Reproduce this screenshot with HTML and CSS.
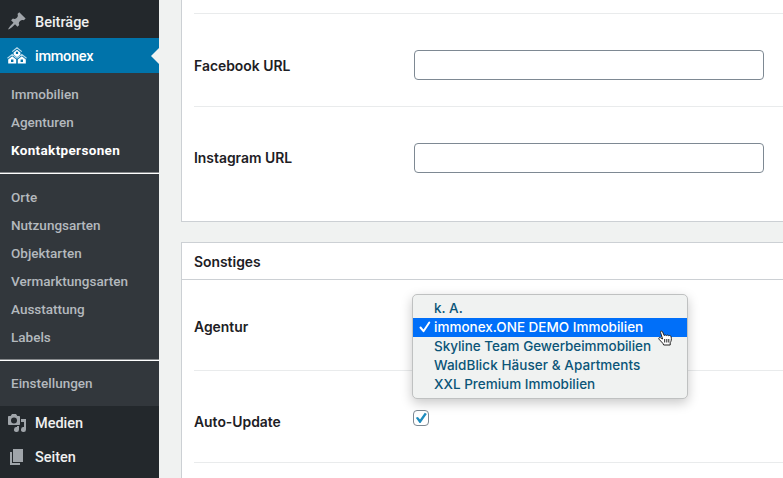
FILE: index.html
```html
<!DOCTYPE html>
<html lang="de">
<head>
<meta charset="utf-8">
<title>Kontaktpersonen</title>
<link rel="stylesheet" href="styles.css">
</head>
<body>
<div class="app">
  <nav class="sidebar">
    <a class="item item-posts">
      <svg class="icon" viewBox="0 0 20 20"><path d="M10.44 3.02l1.82-1.82 6.36 6.35-1.83 1.82c-1.05-.68-2.48-.57-3.41.36l-.75.75c-.92.93-1.04 2.35-.35 3.41l-1.83 1.82-2.41-2.41-2.8 2.79c-.42.42-3.38 2.71-3.8 2.29s1.86-3.39 2.28-3.81l2.79-2.79L4.1 9.36l1.83-1.82c1.05.69 2.48.57 3.4-.36l.75-.75c.93-.92 1.05-2.35.36-3.41z"/></svg>
      <span>Beiträge</span>
    </a>
    <a class="item item-current">
      <svg class="icon houses" viewBox="0 0 20 20">
        <path class="roof" d="M5.200 5.600L10 1.800L14.800 5.600M.500 12.200L5.200 8.400L9.800 12.200M10.200 12.200L14.800 8.400L19.500 12.200"/>
        <path fill-rule="evenodd" d="M10 3.700L6.600 6.400V8.600L10 11.200L13.400 8.600V6.400zM8.900 5.800H11.100V8H8.900zM5.200 10.300L1.200 13.500V17.400H9.200V13.500zM4 13.500H6.400V15.900H4zM14.800 10.300L10.800 13.500V17.400H18.800V13.500zM13.600 13.500H16V15.900H13.600z"/>
      </svg>
      <span>immonex</span>
    </a>
    <div class="submenu">
      <a>Immobilien</a>
      <a>Agenturen</a>
      <a class="active">Kontaktpersonen</a>
      <hr>
      <a>Orte</a>
      <a>Nutzungsarten</a>
      <a>Objektarten</a>
      <a>Vermarktungsarten</a>
      <a>Ausstattung</a>
      <a>Labels</a>
      <hr>
      <a>Einstellungen</a>
    </div>
    <a class="item">
      <svg class="icon" viewBox="0 0 20 20"><path fill-rule="evenodd" d="M13 11V4c0-.55-.45-1-1-1h-1.670L9 1H5L3.670 3H2c-.55 0-1 .45-1 1v7c0 .55.45 1 1 1h10c.55 0 1-.45 1-1zM7 4.500a3 3 0 1 1 0 6 3 3 0 0 1 0-6z"/><path d="M14 6h5v10.500a2.500 2.500 0 1 1-2-2.450V9h-3zM10 13h2v3.500a2.500 2.500 0 1 1-2-2.450z"/></svg>
      <span>Medien</span>
    </a>
    <a class="item">
      <svg class="icon" viewBox="0 0 20 20"><path d="M6 15V2h10v13H6zM5 16h8v2H3V5h2v11z"/></svg>
      <span>Seiten</span>
    </a>
  </nav>
  <main class="content">
    <section class="card card-urls">
      <div class="row"><label>Facebook URL</label><input type="text"></div>
      <div class="row row-last"><label>Instagram URL</label><input type="text"></div>
    </section>
    <section class="card card-misc">
      <h2>Sonstiges</h2>
      <div class="row row-agency">
        <label>Agentur</label>
        <div class="select">
          <ul class="menu">
            <li><span>k. A.</span></li>
            <li class="selected"><svg class="tick" viewBox="0 0 12 12"><path d="M1.500 6.500L4.500 10.200L10.300 1.500"/></svg><span>immonex.ONE DEMO Immobilien</span></li>
            <li><span class="snug">Skyline Team Gewerbeimmobilien</span></li>
            <li><span class="loose">WaldBlick Häuser &amp; Apartments</span></li>
            <li><span>XXL Premium Immobilien</span></li>
          </ul>
          <svg class="pointer" viewBox="0 0 14 16"><path d="M4.600 9L2.600 2.700C2.200 1 3.900.3 4.600 1.900L6.200 5.600C7 4.600 8 4.800 8.500 5.600C9.300 4.700 10.200 5 10.700 5.900C11.700 5 13 5.700 13.200 7C13.600 9.500 13.300 11 12.200 12.700V15H5.700L4.800 13.300L1 9.200C.2 8 1.500 7 2.700 7.800z"/><path class="fingers" d="M6.700 9v3.500M8.800 9v3.500M10.800 9v3.500"/></svg>
        </div>
      </div>
      <div class="row row-update">
        <label>Auto-Update</label>
        <span class="checkbox"><svg viewBox="0 0 14 14"><path d="M1.800 6.700L3.900 6L6 8.400L10.800 1.800L12.800 2.900L6.500 12H5.500z"/></svg></span>
      </div>
    </section>
  </main>
</div>
</body>
</html>
```
FILE: styles.css
```css
* { box-sizing: border-box; }
body { margin: 0; background: #f0f2f1; color: #1d2024; font-family: Inter, "Liberation Sans", sans-serif; }
.app { display: flex; width: 783px; height: 478px; overflow: hidden; }

.sidebar { width: 159px; flex: none; background: #23282c; font-family: Roboto, sans-serif; color: #eee; }
.item { display: flex; align-items: center; height: 34px; padding-left: 7px; gap: 8px; font-size: 14.5px; font-weight: 500; color: #f0f0f0; }
.item-posts { height: 38px; padding-top: 4px; }
.item-posts span { padding-top: 2px; }
.item-current { position: relative; height: 35px; background: #0073aa; color: #fff; letter-spacing: -.3px; }
.item-current span { padding-top: 2px; }
.item-current::after { content: ""; position: absolute; right: 0; top: 10px; border: 8px solid transparent; border-left: 0; border-right-color: #f0f2f1; }
.icon { width: 20px; height: 20px; fill: #a0a5aa; }
.houses { fill: #fff; }
.houses .roof { fill: none; stroke: #b5d9ea; stroke-width: 1.2; }
.submenu { height: 333px; background: #32373c; padding-top: 7px; }
.submenu a { display: block; height: 28.100px; line-height: 28px; padding-left: 11px; font-size: 13.5px; font-weight: 500; color: #b4b9be; }
.submenu a.active { color: #fff; font-weight: 700; letter-spacing: .34px; }
.submenu hr { height: 2px; margin: 8px 0; border: 0; border-top: 1px solid #85888b; background: #fff; }
.submenu hr ~ a { position: relative; top: .4px; }

.content { flex: 1; padding-left: 22px; }
.card { width: 640px; background: #fff; border: 1px solid #ccd0d4; padding: 0 12px; }
.card-urls { height: 222px; border-top: 0; padding-top: 13px; }
.card-misc { margin-top: 20px; height: 260px; padding: 0; }
.card h2 { margin: 0; height: 37px; line-height: 38px; padding-left: 12px; border-bottom: 1px solid #ccd0d4; font-size: 13.900px; font-weight: 600; }
.row { display: flex; align-items: flex-start; height: 93px; border-top: 1px solid #e9ebec; padding-top: 36px; }
.row label { width: 220px; line-height: 32px; font-size: 13.900px; font-weight: 600; }
.row-last label { line-height: 30px; }
.row input { width: 350px; height: 30px; border: 1px solid #7e8993; border-radius: 4px; background: #fff; }
.card-misc .row { margin-left: 12px; }
.card-misc .row-agency { height: 90px; border-top: 0; padding-top: 32px; }
.row-agency label { line-height: 30px; }
.card-misc .row-update { height: 93px; border-bottom: 1px solid #e9ebec; padding-top: 35px; }

.select { position: relative; width: 275px; height: 30px; }
.menu { position: absolute; z-index: 1; left: -2px; top: -18px; width: 276px; height: 105px; margin: 0; padding: 4px 0; list-style: none; background: #f0f2f1; border: 1px solid #bfc1c1; border-radius: 5px; box-shadow: 0 4px 12px rgba(0,0,0,.22); font-size: 13.5px; font-weight: 500; color: #0b5578; }
.menu li { position: relative; height: 19px; line-height: 19px; padding-left: 21px; white-space: nowrap; }
.menu .selected { background: #006ff9; color: #fff; }
.snug { letter-spacing: -.04px; }
.loose { letter-spacing: .06px; }
.tick { position: absolute; left: 6px; top: 3px; width: 12px; height: 12px; fill: none; stroke: #fff; stroke-width: 2; stroke-linecap: round; stroke-linejoin: round; }
.pointer { position: absolute; z-index: 2; left: 244px; top: 18px; width: 14px; height: 16px; fill: #fff; stroke: #222; stroke-width: 1; overflow: visible; }
.checkbox { width: 16px; height: 16px; margin-top: 4px; border: 1px solid #7e8993; border-radius: 4px; margin-left: -1px; }
.checkbox svg { display: block; width: 14px; height: 14px; fill: #1e8cbe; }
```
